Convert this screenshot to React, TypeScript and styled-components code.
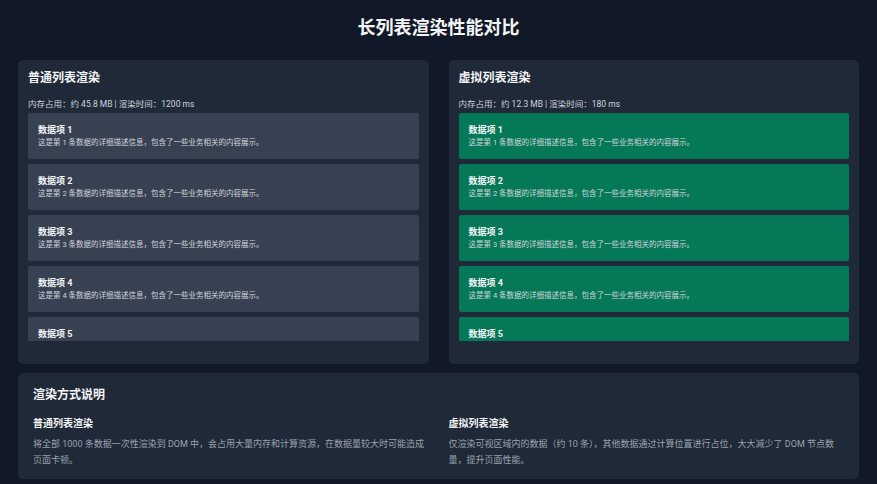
import React from "react"
import styled, { createGlobalStyle } from "styled-components"

const Global = createGlobalStyle`
  body { margin: 0; background: #111827; font-family: Roboto, "Noto Sans CJK SC", sans-serif; color: #f3f4f6; }
`

const Page = styled.div`
  padding: 14px 18px 5px;
`
const Title = styled.h1`
  margin: 0 0 19px;
  text-align: center;
  font-size: 18px;
  line-height: 27px;
  font-weight: 700;
`
const Grid = styled.div`
  display: grid;
  grid-template-columns: 1fr 1fr;
  gap: 20px;
`
const Panel = styled.section`
  background: #1f2937;
  border-radius: 5px;
  padding: 9px 10px 20px;
  height: 304px;
  box-sizing: border-box;
`
const PanelTitle = styled.h2`
  margin: 0;
  font-size: 12px;
  line-height: 18px;
  font-weight: 700;
`
const Meta = styled.div`
  margin-top: 11px;
  font-size: 8.5px;
  line-height: 12px;
  color: #d1d5db;
`
const ListView = styled.div`
  margin-top: 3px;
  height: 228px;
  overflow: hidden;
  display: flex;
  flex-direction: column;
  gap: 5px;
`
const Item = styled.div<{ $virtual?: boolean }>`
  flex: none;
  height: 46px;
  box-sizing: border-box;
  padding: 10px 10px 8px;
  background: ${(p) => (p.$virtual ? "#047857" : "#374151")};
  border-radius: 2px;
`
const ItemTitle = styled.div`
  font-size: 9px;
  font-weight: 700;
  line-height: 14px;
`
const ItemDesc = styled.div`
  font-size: 7.5px;
  line-height: 11px;
  color: #d1d5db;
`
const Notes = styled.section`
  margin-top: 9px;
  background: #1f2937;
  border-radius: 5px;
  padding: 13px 15px 11px;
`
const NotesTitle = styled.h2`
  margin: 0 0 12px;
  font-size: 12px;
  line-height: 18px;
  font-weight: 700;
`
const NotesGrid = styled.div`
  display: grid;
  grid-template-columns: 1fr 1fr;
  gap: 20px;
`
const NoteHead = styled.h3`
  margin: 0 0 5px;
  font-size: 10px;
  line-height: 15px;
  font-weight: 700;
`
const NoteText = styled.p`
  margin: 0;
  font-size: 9px;
  line-height: 16px;
  color: #9ca3af;
`

const items = Array.from({ length: 6 }, (_, i) => i + 1)

const ListPanel = ({ title, meta, virtual }: { title: string; meta: string; virtual?: boolean }) => (
  <Panel>
    <PanelTitle>{title}</PanelTitle>
    <Meta>{meta}</Meta>
    <ListView>
      {items.map((n) => (
        <Item key={n} $virtual={virtual}>
          <ItemTitle>数据项 {n}</ItemTitle>
          <ItemDesc>这是第 {n} 条数据的详细描述信息，包含了一些业务相关的内容展示。</ItemDesc>
        </Item>
      ))}
    </ListView>
  </Panel>
)

export default function App() {
  return (
    <Page>
      <Global />
      <Title>长列表渲染性能对比</Title>
      <Grid>
        <ListPanel title="普通列表渲染" meta="内存占用：约 45.8 MB | 渲染时间：1200 ms" />
        <ListPanel title="虚拟列表渲染" meta="内存占用：约 12.3 MB | 渲染时间：180 ms" virtual />
      </Grid>
      <Notes>
        <NotesTitle>渲染方式说明</NotesTitle>
        <NotesGrid>
          <div>
            <NoteHead>普通列表渲染</NoteHead>
            <NoteText>将全部 1000 条数据一次性渲染到 DOM 中，会占用大量内存和计算资源，在数据量较大时可能造成页面卡顿。</NoteText>
          </div>
          <div>
            <NoteHead>虚拟列表渲染</NoteHead>
            <NoteText>仅渲染可视区域内的数据（约 10 条），其他数据通过计算位置进行占位，大大减少了 DOM 节点数量，提升页面性能。</NoteText>
          </div>
        </NotesGrid>
      </Notes>
    </Page>
  )
}
